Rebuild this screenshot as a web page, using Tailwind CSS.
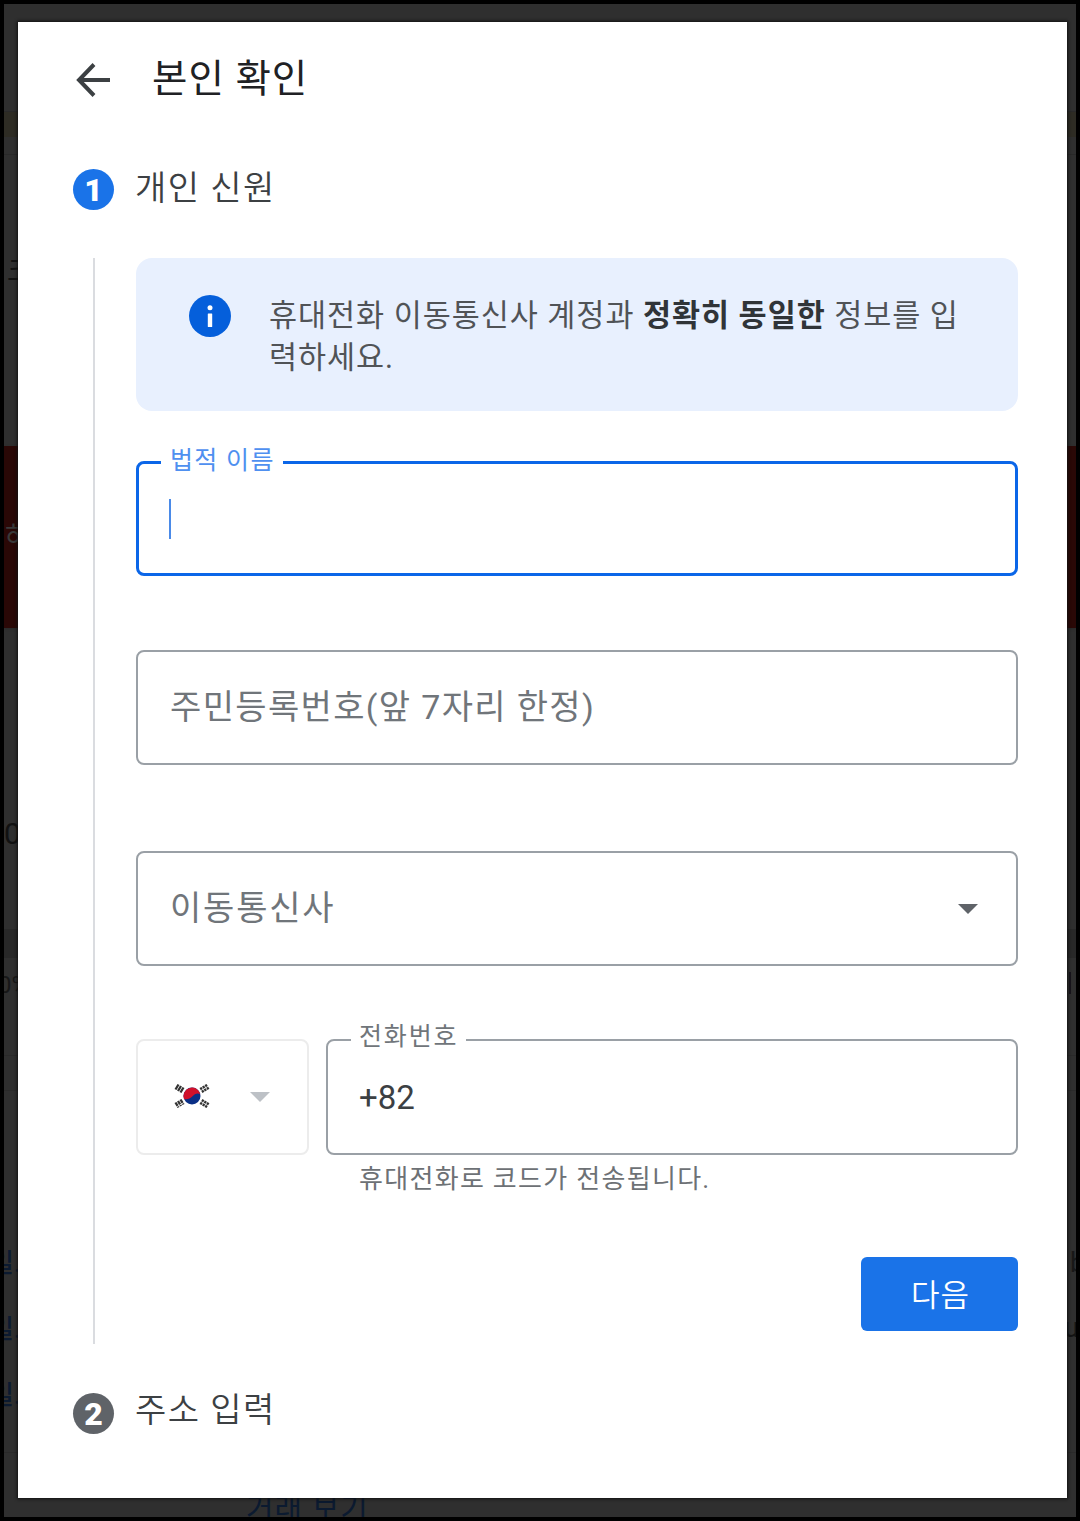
<!DOCTYPE html>
<html lang="ko">

<head>
    <meta charset="UTF-8">
    <meta name="viewport" content="width=device-width, initial-scale=1.0">
    <title>본인 확인</title>
    <script src="https://cdn.jsdelivr.net/npm/@tailwindcss/browser@4"></script>
</head>

<body class="bg-black font-['Roboto','Noto_Sans_CJK_KR',sans-serif]">
    <div class="relative h-[1521px] w-[1080px] overflow-hidden border-4 border-black bg-[#2f2f2f]">

        <!-- Dimmed page behind the dialog -->
        <div class="absolute inset-0 whitespace-nowrap" aria-hidden="true">
            <div class="absolute inset-x-0 top-[107px] h-[44px] border-y border-[#292929]">
                <div class="h-[25px] bg-[#2e2c24]"></div>
            </div>
            <span class="absolute left-[3px] top-[253px] text-[28px] leading-[30px] text-[#111]">크</span>
            <div class="absolute inset-x-0 top-[442px] h-[182px] bg-[#2a0806] shadow-sm"></div>
            <span class="absolute left-[1px] top-[518px] text-[27px] leading-[30px] text-[#3a3a3a]">하</span>
            <span class="absolute left-0 top-[814px] text-[30px] leading-[32px] text-[#111]">0</span>
            <div class="absolute inset-x-0 top-[925px] h-[29px] bg-[#282828]"></div>
            <span class="absolute -left-[6px] top-[966px] text-[24px] leading-[30px] text-[#171717]">0%</span>
            <div class="absolute left-[1065px] top-[968px] h-[22px] w-[2px] bg-[#18151c]"></div>
            <div class="absolute inset-x-0 top-[1051px] h-[36px] border-y border-[#2a2a2a]"></div>
            <span class="absolute -left-[14px] top-[1244px] text-[26px] font-medium leading-[30px] text-[#0b1a30]">일.</span>
            <span class="absolute -left-[14px] top-[1310px] text-[26px] font-medium leading-[30px] text-[#0b1a30]">일.</span>
            <span class="absolute -left-[14px] top-[1376px] text-[26px] font-medium leading-[30px] text-[#0b1a30]">일.</span>
            <span class="absolute left-[1066px] top-[1244px] text-[27px] leading-[30px] text-[#171717]">b</span>
            <span class="absolute left-[1060px] top-[1309px] text-[27px] leading-[30px] text-[#131313]">u</span>
            <div class="absolute inset-x-0 top-[1448px] h-px bg-[#2a2a2a]"></div>
            <span class="absolute left-[242px] top-[1488px] text-[30px] leading-[34px] tracking-[1px] text-[#0b1a30]">거래 보기</span>
        </div>

        <!-- Dialog -->
        <main class="relative ml-[14px] mt-[18px] h-[1476px] w-[1049px] bg-white pl-[54px] pr-[49px] text-[#3c4043] shadow-[0_0_3px_1px_#111]">
            <header class="flex h-[116px] items-center">
                <svg class="ml-[3px] h-[36px] w-[36px]" viewBox="0 0 36 36" fill="none" stroke="#3c4043" stroke-width="4">
                    <path d="M19 2.500 4 18l15 15.500M4 18H35" />
                </svg>
                <h1 class="-mt-[2px] ml-[41px] text-[38.500px] leading-[50px] tracking-[1px] text-[#202124]">본인 확인</h1>
            </header>

            <!-- Step 1 -->
            <section>
                <div class="mt-[30px] flex h-[42px] items-center">
                    <span class="ml-px flex h-[41px] w-[41px] items-center justify-center rounded-full bg-[#1a73e8] pt-px text-[32px] font-black leading-none text-white">1</span>
                    <h2 class="-mt-[2px] ml-[21px] text-[34px] font-[350] leading-[42px] tracking-[1.500px]">개인 신원</h2>
                </div>

                <div class="ml-[21px] mt-[48px] h-[1086px] border-l-2 border-[#dadce0] pl-[41px]">
                    <div class="flex h-[153px] rounded-2xl bg-[#e8f0fe] pl-[53px] pt-[37px]">
                        <svg class="h-[42px] w-[42px] shrink-0" viewBox="0 0 42 42">
                            <circle cx="21" cy="21" r="21" fill="#055fdb" />
                            <circle cx="21" cy="12.800" r="2.500" fill="#fff" />
                            <rect x="18.800" y="18.500" width="4.400" height="13.500" rx=".5" fill="#fff" />
                        </svg>
                        <p class="ml-[38px] text-[30.500px] leading-[42px] tracking-[.970px] text-[#505357]">휴대전화 이동통신사 계정과 <b class="font-bold text-[#303438]">정확히 동일한</b> 정보를 입<br>력하세요.</p>
                    </div>

                    <div class="relative mt-[50px] flex h-[115px] items-center rounded-lg border-3 border-[#0b66e8] pl-[30px]">
                        <label class="absolute -top-[19px] left-[22px] bg-white pl-[9px] pr-[8px] text-[25px] leading-[32px] tracking-[1.300px] text-[#4f90f0]">법적 이름</label>
                        <div class="h-[40px] w-[2px] bg-[#4a8ae8]"></div>
                    </div>

                    <div class="mt-[74px] flex h-[115px] items-center rounded-lg border-2 border-[#9aa0a6] pl-[32px] text-[34px] tracking-[1.350px] text-[#70757a]">
                        <span>주민등록번호(앞 7자리 한정)</span>
                    </div>

                    <div class="mt-[86px] flex h-[115px] items-center justify-between rounded-lg border-2 border-[#9aa0a6] pl-[32px] pr-[38px] text-[34px] tracking-[1.800px] text-[#70757a]">
                        <span>이동통신사</span>
                        <svg class="h-[10px] w-[20px]" viewBox="0 0 20 10" fill="#5f6368">
                            <path d="M0 0h20L10 10z" />
                        </svg>
                    </div>

                    <div class="mt-[73px] flex gap-[17px]">
                        <div class="flex h-[116px] w-[173px] items-center justify-between rounded-lg border-2 border-[#ececec] pl-[36px] pr-[37px]">
                            <svg class="mb-[2px] h-[28px] w-[36px]" viewBox="0 0 36 28">
                                <g stroke="#333" stroke-width="2.300">
                                    <path d="M1.500 7.500 4.500 2.500M4 9 7 4M6.500 10.500 9.500 5.500" />
                                    <path d="M26.500 5.500l3 5M29 4l3 5M31.500 2.500l3 5" stroke-dasharray="2.500 .7" />
                                    <path d="M1.500 20.500l3 5M4 19l3 5M6.500 17.500l3 5" stroke-dasharray="4 .7" />
                                    <path d="M26.500 22.500l3-5M29 24l3-5M31.500 25.500l3-5" stroke-dasharray="2.500 .7" />
                                </g>
                                <circle cx="18" cy="14" r="8.500" fill="#0a2f86" />
                                <path d="M10 17A8.500 8.500 0 1 1 26.300 12.300C23.500 10.500 20.500 12 18.500 14.300 16 17.200 12.500 17.800 10 17z" fill="#d0112b" />
                            </svg>
                            <svg class="h-[10px] w-[20px]" viewBox="0 0 20 10" fill="#bdc1c6">
                                <path d="M0 0h20L10 10z" />
                            </svg>
                        </div>
                        <div class="relative flex h-[116px] flex-1 items-center rounded-lg border-2 border-[#9aa0a6] pl-[31px] pt-[2px] text-[33px]">
                            <label class="absolute -top-[20px] left-[23px] bg-white px-[8px] text-[25px] leading-[32px] tracking-[1.850px] text-[#70757a]">전화번호</label>
                            <span>+82</span>
                        </div>
                    </div>
                    <p class="ml-[223px] mt-[7px] text-[26px] leading-[34px] tracking-[1.300px] text-[#6d7175]">휴대전화로 코드가 전송됩니다.</p>

                    <div class="mt-[61px] flex justify-end">
                        <button class="h-[74px] w-[157px] rounded-md bg-[#1a73e8] pl-[2px] pt-[4px] text-[31px] font-[350] tracking-[1px] text-white">다음</button>
                    </div>
                </div>
            </section>

            <!-- Step 2 -->
            <section class="mt-[48px] flex h-[42px] items-center">
                <span class="ml-px flex h-[41px] w-[41px] items-center justify-center rounded-full bg-[#5f6368] pt-px text-[32px] font-black leading-none text-white">2</span>
                <h2 class="-mt-[7px] ml-[21px] text-[34px] font-[350] leading-[42px] tracking-[1.500px]">주소 입력</h2>
            </section>
        </main>
    </div>
</body>

</html>
